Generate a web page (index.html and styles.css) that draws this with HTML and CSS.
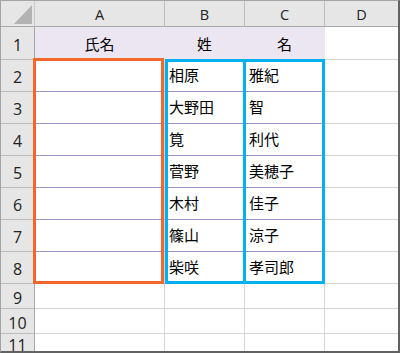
FILE: index.html
```html
<!DOCTYPE html>
<html lang="ja">
<head>
    <meta charset="UTF-8">
    <meta name="viewport" content="width=device-width, initial-scale=1.0">
    <title>氏名の分割</title>
    <link rel="stylesheet" href="styles.css">
</head>
<body>
<div class="sheet">
    <div class="grid">
        <div class="corner">
            <svg width="33" height="25" viewBox="0 0 33 25"><polygon points="31,4 31,23 13,23" fill="#b3b3b3"/></svg>
        </div>
        <div class="col-head">A</div>
        <div class="col-head">B</div>
        <div class="col-head">C</div>
        <div class="col-head last">D</div>

        <div class="row-head">1</div>
        <div class="cell title">氏名</div>
        <div class="cell title">姓</div>
        <div class="cell title">名</div>
        <div class="cell last"></div>

        <div class="row-head">2</div>
        <div class="cell list"></div>
        <div class="cell list">相原</div>
        <div class="cell list">雅紀</div>
        <div class="cell last"></div>

        <div class="row-head">3</div>
        <div class="cell list"></div>
        <div class="cell list">大野田</div>
        <div class="cell list">智</div>
        <div class="cell last"></div>

        <div class="row-head">4</div>
        <div class="cell list"></div>
        <div class="cell list">筧</div>
        <div class="cell list">利代</div>
        <div class="cell last"></div>

        <div class="row-head">5</div>
        <div class="cell list"></div>
        <div class="cell list">菅野</div>
        <div class="cell list">美穂子</div>
        <div class="cell last"></div>

        <div class="row-head">6</div>
        <div class="cell list"></div>
        <div class="cell list">木村</div>
        <div class="cell list">佳子</div>
        <div class="cell last"></div>

        <div class="row-head">7</div>
        <div class="cell list"></div>
        <div class="cell list">篠山</div>
        <div class="cell list">涼子</div>
        <div class="cell last"></div>

        <div class="row-head">8</div>
        <div class="cell list"></div>
        <div class="cell list">柴咲</div>
        <div class="cell list">孝司郎</div>
        <div class="cell last"></div>

        <div class="row-head">9</div>
        <div class="cell"></div>
        <div class="cell"></div>
        <div class="cell"></div>
        <div class="cell last"></div>

        <div class="row-head">10</div>
        <div class="cell"></div>
        <div class="cell"></div>
        <div class="cell"></div>
        <div class="cell last"></div>

        <div class="row-head bottom">11</div>
        <div class="cell bottom"></div>
        <div class="cell bottom"></div>
        <div class="cell bottom"></div>
        <div class="cell last bottom"></div>
    </div>

    <!-- range outlines: A2:A8, B2:B8, C2:C8 -->
    <div class="range range-full"></div>
    <div class="range range-last"></div>
    <div class="range range-first"></div>
</div>
</body>
</html>
```

FILE: styles.css
```css
html, body {
    margin: 0;
    padding: 0;
    background: #fff;
}

.sheet {
    position: relative;
    width: 400px;
    height: 353px;
    box-sizing: border-box;
    border-top: 1px solid #a3a3a3;
    border-left: 1px solid #a3a3a3;
    border-right: 2px solid #626262;
    border-bottom: 2px solid #626262;
    overflow: hidden;
}

.grid {
    display: grid;
    grid-template-columns: 34px 130px 80px 80px 1fr;
    grid-template-rows: 26px 33px repeat(7, 32px) 25px 25px 1fr;
    height: 100%;
}

.grid > div {
    box-sizing: border-box;
    border-right: 1px solid #d4d4d4;
    border-bottom: 1px solid #d4d4d4;
    display: flex;
    align-items: center;
    overflow: hidden;
}

.corner {
    background: #e6e6e6;
    border-right-color: #c8c8c8 !important;
    border-bottom-color: #a8a8a8 !important;
}

.col-head {
    background: #e6e6e6;
    justify-content: center;
    font-family: "Open Sans", "Liberation Sans", sans-serif;
    font-size: 14.5px;
    color: #222;
    border-right-color: #bdbdbd !important;
    border-bottom-color: #a8a8a8 !important;
    padding-top: 1px;
}

.row-head {
    background: #e6e6e6;
    justify-content: center;
    font-family: "Open Sans", "Liberation Sans", sans-serif;
    font-size: 16px;
    line-height: 1;
    color: #222;
    border-right-color: #a8a8a8 !important;
    border-bottom-color: #bdbdbd !important;
    padding-top: 3px;
}

/* last row is only partly visible, keep its number near the top */
.row-head.bottom {
    align-items: flex-start;
    padding-top: 3px;
}

.cell {
    font-family: "Noto Sans CJK JP", sans-serif;
    font-size: 15px;
    color: #000;
    padding-left: 4px;
    line-height: 1;
}

.cell.title {
    background: #ebe6f1;
    justify-content: center;
    padding-left: 0;
    border-right-color: #ebe6f1;
}

.cell.list {
    border-bottom-color: #a090c8;
    padding-bottom: 3px;
}

.grid > .last {
    border-right: none;
}

.grid > .bottom {
    border-bottom: none;
}

.range {
    position: absolute;
    box-sizing: border-box;
    border: 3px solid #00b0f0;
}

.range-full {
    left: 32px;
    top: 57px;
    width: 131px;
    height: 226px;
    border-color: #f2682a;
}

.range-first {
    left: 164px;
    top: 58px;
    width: 81px;
    height: 225px;
}

.range-last {
    left: 242px;
    top: 58px;
    width: 82px;
    height: 225px;
}
```
